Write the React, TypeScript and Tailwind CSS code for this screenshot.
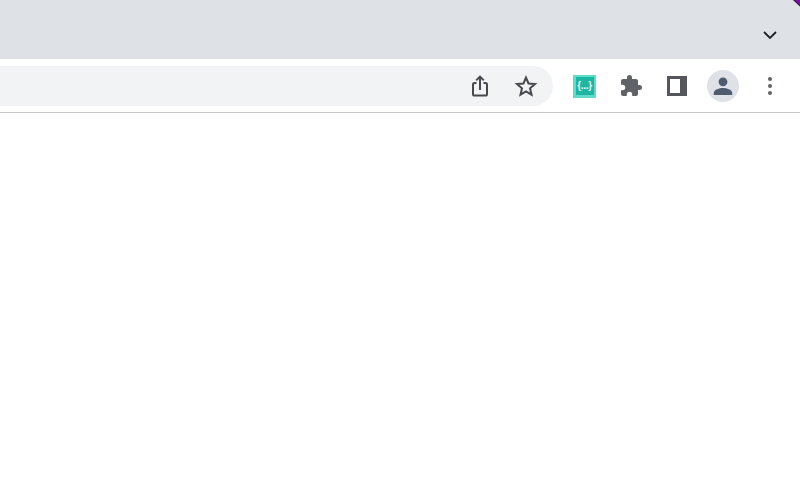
// App.tsx
function ShareIcon() {
  return (
    <svg width="24" height="24" viewBox="0 0 24 24" fill="none" stroke="#45484c" strokeWidth="2">
      <path d="M8.500 9H6.600C5.700 9 5 9.700 5 10.600v9.300c0 .9.700 1.600 1.600 1.600h10.800c.9 0 1.600-.7 1.600-1.600v-9.300c0-.9-.7-1.600-1.600-1.600h-1.900" />
      <path d="M12 16V2.800M8.200 6.400L12 2.600l3.800 3.800" />
    </svg>
  );
}

function StarIcon() {
  return (
    <svg width="24" height="24" viewBox="0 0 24 24" fill="none" stroke="#45484c" strokeWidth="2" strokeLinejoin="miter">
      <path d="M12 3.600l2.500 5.900 6.500.5-5 4.300 1.500 6.300L12 17.300l-5.500 3.300 1.500-6.300-5-4.300 6.500-.5z" />
    </svg>
  );
}

function ExtensionBadge() {
  return (
    <div className="w-[23px] h-[23px] bg-[#5fdcc8] flex items-center justify-center">
      <div className="w-[18px] h-[18px] bg-[#1fb5a3] flex items-center justify-center overflow-hidden">
        <span className="text-[10px] leading-none font-bold text-[#e6fbf7] tracking-[-0.3px] font-['Liberation_Sans',sans-serif]">
          {"{...}"}
        </span>
      </div>
    </div>
  );
}

function PuzzleIcon() {
  return (
    <svg width="24" height="24" viewBox="0 0 24 24" fill="#5f6368">
      <path d="M20.500 11H19V7c0-1.100-.9-2-2-2h-4V3.500a2.500 2.500 0 0 0-5 0V5H4c-1.100 0-2 .9-2 2v3.800h1.500a2.700 2.700 0 0 1 0 5.400H2V20c0 1.100.9 2 2 2h3.800v-1.500a2.700 2.700 0 0 1 5.400 0V22H17c1.100 0 2-.9 2-2v-4h1.500a2.500 2.500 0 0 0 0-5z" />
    </svg>
  );
}

function SidePanelIcon() {
  return (
    <div className="w-[20px] h-[20px] bg-[#54585e] p-[3px] pr-[7px]">
      <div className="w-full h-full bg-white" />
    </div>
  );
}

function Avatar() {
  return (
    <div className="w-[32px] h-[32px] rounded-full bg-[#dee1e6] flex items-center justify-center">
      <svg width="24" height="24" viewBox="0 0 24 24" fill="#4f5b6e">
        <circle cx="12" cy="7.800" r="4.400" />
        <path d="M2.800 21v-2.200c0-3.200 6-4.800 9.200-4.800s9.200 1.600 9.200 4.800V21z" />
      </svg>
    </div>
  );
}

function MenuDots() {
  return (
    <div className="flex flex-col gap-[3px] items-center">
      <span className="w-[4px] h-[4px] rounded-full bg-[#5f6368]" />
      <span className="w-[4px] h-[4px] rounded-full bg-[#5f6368]" />
      <span className="w-[4px] h-[4px] rounded-full bg-[#5f6368]" />
    </div>
  );
}

export default function App() {
  return (
    <div className="relative w-[800px] h-[488px] bg-white overflow-hidden">
      {/* Tab strip */}
      <div className="h-[59px] bg-[#dee1e6] flex items-end justify-end pr-[22px] pb-[16px]">
        <svg width="16" height="16" viewBox="0 0 16 16" fill="none" stroke="#202124" strokeWidth="1.800">
          <path d="M2 5l6 6 6-6" />
        </svg>
      </div>

      {/* Toolbar */}
      <div className="h-[54px] bg-white border-b border-[#c6c7c9] flex items-center pt-[1px]">
        <div className="w-[553px] h-[40px] bg-[#f1f3f4] rounded-r-[20px] flex items-center justify-end pr-[15px] gap-[22px]">
          <ShareIcon />
          <StarIcon />
        </div>
        <div className="ml-[20px] w-[23px] flex justify-center">
          <ExtensionBadge />
        </div>
        <div className="ml-[23px] w-[24px] flex justify-center">
          <PuzzleIcon />
        </div>
        <div className="ml-[22px] w-[24px] flex justify-center">
          <SidePanelIcon />
        </div>
        <div className="ml-[18px]">
          <Avatar />
        </div>
        <div className="ml-[29px]">
          <MenuDots />
        </div>
      </div>

      {/* window corner peeking through */}
      <svg className="absolute top-0 right-0" width="8" height="7" viewBox="0 0 8 7">
        <path d="M1 0h7v6.500z" fill="#14081c" />
        <path d="M2 0h6v5.500z" fill="#7a0fa8" />
      </svg>
    </div>
  );
}
